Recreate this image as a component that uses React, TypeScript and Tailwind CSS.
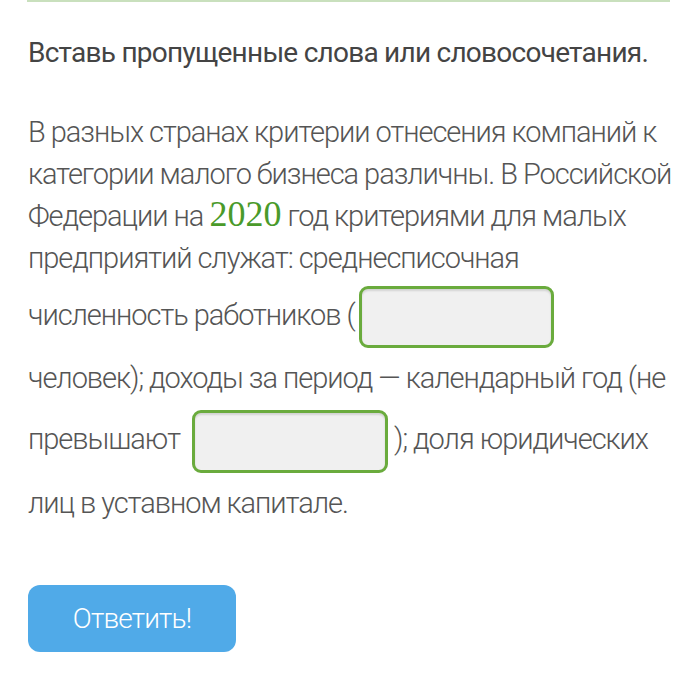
export default function App() {
  return (
    <div className="min-h-[698px] w-[697px] bg-white font-['Roboto',sans-serif]">
      <div className="mx-[27px] h-[2px] bg-[#c9e0bd]" />
      <div className="pl-[28px] pr-[16px] pt-[33px]">
        <h1 className="text-[28px] leading-[36px] font-normal tracking-[-0.027em] text-[#444444]">
          Вставь пропущенные слова или словосочетания.
        </h1>

        <p className="mt-[40px] text-[29px] leading-[42px] font-light tracking-[-0.036em] text-[#555555]">
          В разных странах критерии отнесения компаний к
          <br />
          категории малого бизнеса различны. В Российской
          <br />
          Федерации на{' '}
          <span className="font-['Liberation_Serif',serif] text-[36px] leading-[30px] tracking-normal text-[#4a9a2a]">2020</span>{' '}
          год критериями для малых
          <br />
          предприятий служат: среднесписочная
        </p>

        <p className="mt-[6px] text-[29px] leading-[61px] font-light tracking-[-0.036em] text-[#555555]">
          численность работников (
          <input
            type="text"
            className="mx-[4px] inline-block h-[62px] w-[195px] rounded-[9px] border-[3px] border-[#6aab3d] bg-[#f0f0f0] align-middle shadow-[inset_0_2px_2px_rgba(0,0,0,0.12)] outline-none"
          />
          <br />
          человек); доходы за период — календарный год (не
          <br />
          превышают{' '}
          <input
            type="text"
            className="mx-[6px] inline-block h-[63px] w-[196px] rounded-[9px] border-[3px] border-[#6aab3d] bg-[#f0f0f0] align-middle shadow-[inset_0_2px_2px_rgba(0,0,0,0.12)] outline-none"
          />
          ); доля юридических
          <br />
          лиц в уставном капитале.
        </p>

        <button
          type="button"
          className="mt-[51px] h-[67px] w-[208px] rounded-[12px] bg-[#50aae8] text-[28px] font-light tracking-[-0.03em] text-white"
        >
          Ответить!
        </button>
      </div>
    </div>
  );
}
